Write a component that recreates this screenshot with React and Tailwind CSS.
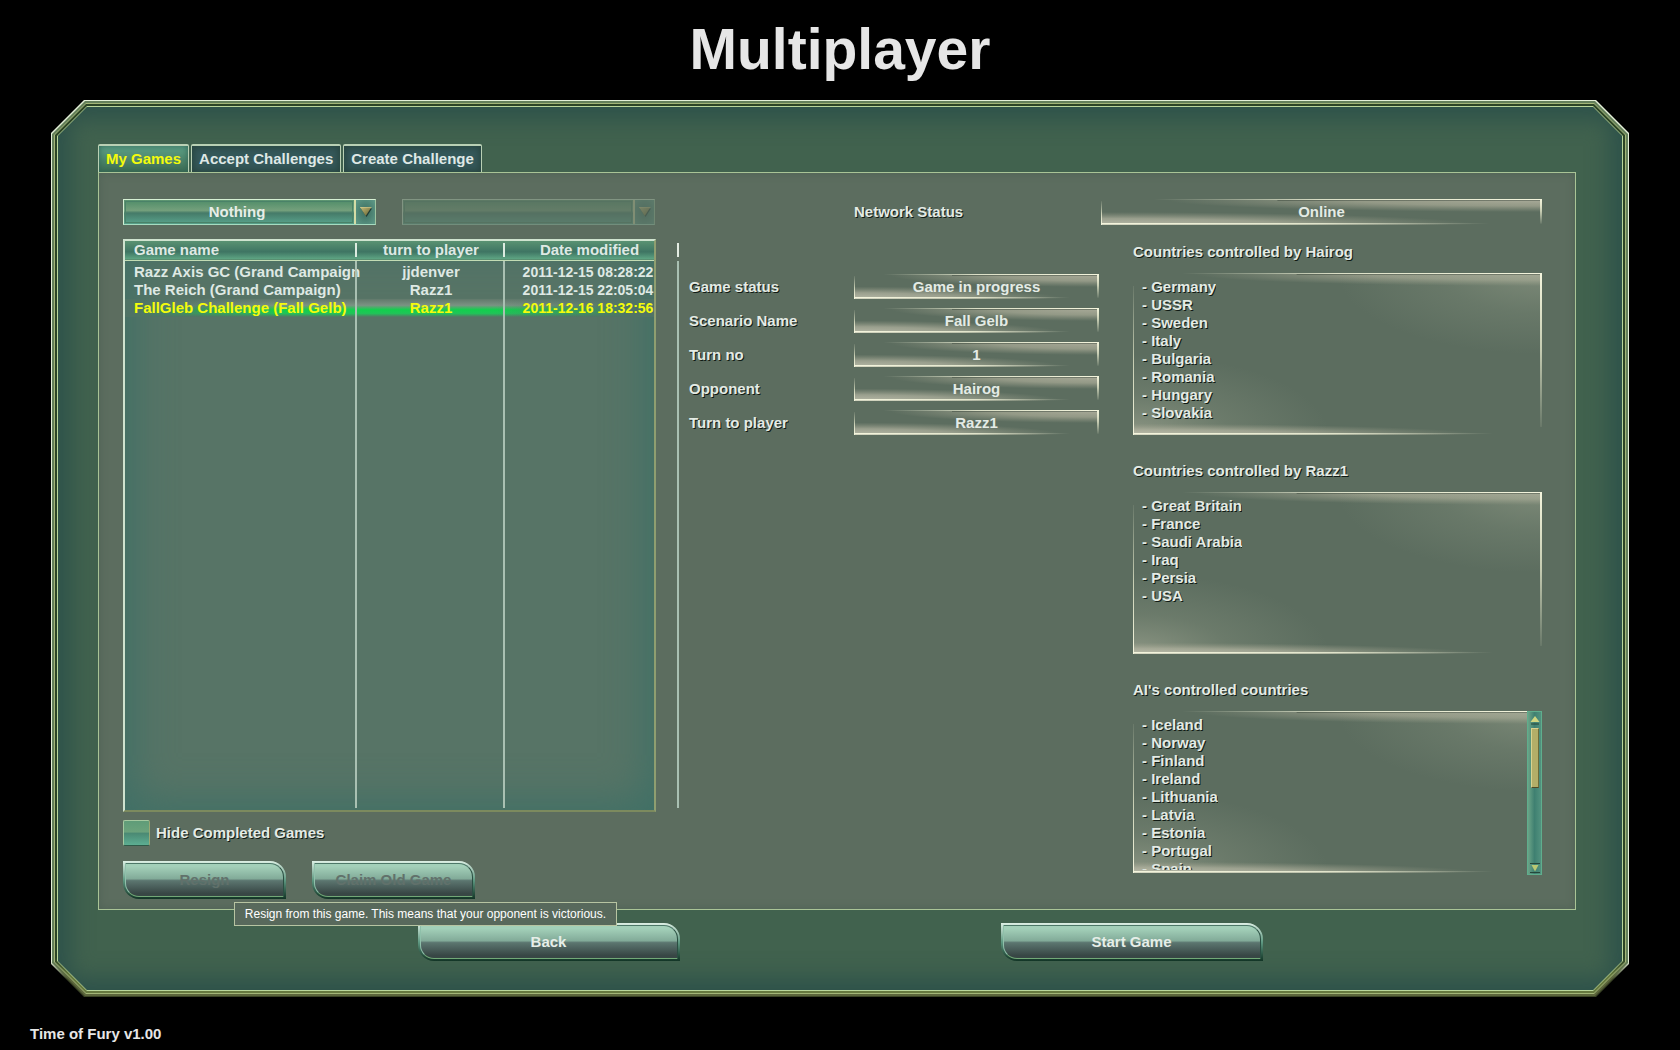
import React, { useState } from "react";

const games = [
  { name: "Razz Axis GC (Grand Campaign", player: "jjdenver", date: "2011-12-15 08:28:22" },
  { name: "The Reich (Grand Campaign)", player: "Razz1", date: "2011-12-15 22:05:04" },
  { name: "FallGleb Challenge (Fall Gelb)", player: "Razz1", date: "2011-12-16 18:32:56" },
];

const details = [
  { label: "Game status", value: "Game in progress" },
  { label: "Scenario Name", value: "Fall Gelb" },
  { label: "Turn no", value: "1" },
  { label: "Opponent", value: "Hairog" },
  { label: "Turn to player", value: "Razz1" },
];

const countries = [
  {
    title: "Countries controlled by Hairog",
    list: ["Germany", "USSR", "Sweden", "Italy", "Bulgaria", "Romania", "Hungary", "Slovakia"],
  },
  {
    title: "Countries controlled by Razz1",
    list: ["Great Britain", "France", "Saudi Arabia", "Iraq", "Persia", "USA"],
  },
  {
    title: "AI's controlled countries",
    list: ["Iceland", "Norway", "Finland", "Ireland", "Lithuania", "Latvia", "Estonia", "Portugal", "Spain"],
    scroll: true,
  },
];

const Gradients = () => (
  <svg className="absolute w-0 h-0" aria-hidden="true">
    <defs>
      <linearGradient id="lineTop">
        <stop offset="0.12" stopColor="#e9ecd2" stopOpacity="0" />
        <stop offset="0.5" stopColor="#e9ecd2" stopOpacity="0.9" />
        <stop offset="1" stopColor="#f4f5dd" />
      </linearGradient>
      <linearGradient id="lineBottom">
        <stop offset="0" stopColor="#f4f5dd" />
        <stop offset="0.5" stopColor="#e9ecd2" stopOpacity="0.9" />
        <stop offset="0.88" stopColor="#e9ecd2" stopOpacity="0" />
      </linearGradient>
      <linearGradient id="lineRight" x2="0" y2="1">
        <stop offset="0" stopColor="#f4f5dd" />
        <stop offset="0.5" stopColor="#dfe3c6" stopOpacity="0.8" />
        <stop offset="1" stopColor="#dfe3c6" stopOpacity="0.1" />
      </linearGradient>
      <linearGradient id="lineLeft" x2="0" y2="1">
        <stop offset="0" stopColor="#dfe3c6" stopOpacity="0.1" />
        <stop offset="0.5" stopColor="#dfe3c6" stopOpacity="0.8" />
        <stop offset="1" stopColor="#f4f5dd" />
      </linearGradient>
      <radialGradient id="glowTop" cx="1" cy="0" r="1">
        <stop offset="0" stopColor="#b0b09e" stopOpacity="0.9" />
        <stop offset="0.5" stopColor="#a6a894" stopOpacity="0.75" />
        <stop offset="1" stopColor="#9da08c" stopOpacity="0" />
      </radialGradient>
      <radialGradient id="glowBottom" cx="0" cy="1" r="1">
        <stop offset="0" stopColor="#c2c2b0" stopOpacity="0.9" />
        <stop offset="0.5" stopColor="#aeb09d" stopOpacity="0.75" />
        <stop offset="1" stopColor="#9da08c" stopOpacity="0" />
      </radialGradient>
      <radialGradient id="hazeTop" cx="1" cy="0" r="1">
        <stop offset="0" stopColor="#a0a892" stopOpacity="0.5" />
        <stop offset="0.5" stopColor="#94a08a" stopOpacity="0.22" />
        <stop offset="1" stopColor="#94a08a" stopOpacity="0" />
      </radialGradient>
      <radialGradient id="hazeBottom" cx="0" cy="1" r="1">
        <stop offset="0" stopColor="#b0b49f" stopOpacity="0.6" />
        <stop offset="0.5" stopColor="#98a28c" stopOpacity="0.25" />
        <stop offset="1" stopColor="#94a08a" stopOpacity="0" />
      </radialGradient>
      <linearGradient id="arrow" x2="1" y2="1">
        <stop offset="0" stopColor="#c8c07c" />
        <stop offset="1" stopColor="#5f5c2c" />
      </linearGradient>
    </defs>
  </svg>
);

const Bevel = ({ large }) => (
  <svg className="absolute inset-0 w-full h-full" aria-hidden="true">
    <rect x="15%" y="1" width="85%" height="12" fill="url(#glowTop)" />
    <svg width="100%" height="100%" viewBox="0 0 100 100" preserveAspectRatio="none">
      {large ? (
        <>
          <rect x="50" y="0" width="50" height="50" fill="url(#hazeTop)" />
          <rect x="0" y="50" width="48" height="50" fill="url(#hazeBottom)" />
          <rect x="0" y="93" width="85" height="7" fill="url(#glowBottom)" />
        </>
      ) : (
        <rect x="0" y="50" width="85" height="50" fill="url(#glowBottom)" />
      )}
    </svg>
    <rect width="100%" height="1" fill="url(#lineTop)" />
    <rect x="40%" y="1" width="60%" height="1" fill="#2c3a30" opacity="0.4" />
    <svg x="100%" width="2" height="100%" overflow="visible">
      <rect x="-2" width="2" height="95%" fill="url(#lineRight)" />
    </svg>
    <rect y="8%" width="1" height="92%" fill="url(#lineLeft)" />
    <svg y="100%" width="100%" height="2" overflow="visible">
      <rect y="-2" width="100%" height="1" fill="url(#lineBottom)" />
      <rect y="-1" width="90%" height="1" fill="url(#lineBottom)" opacity="0.5" />
    </svg>
  </svg>
);

const Arrow = () => (
  <svg width="12" height="10" viewBox="0 0 12 10" aria-hidden="true">
    <path d="M1 1.500L12 1.500L6.500 10Z" fill="#1f3a34" />
    <path d="M0 0H11.500L5.700 9Z" fill="url(#arrow)" />
    <path d="M0 0H11.500" stroke="#d9d296" />
  </svg>
);

const Dropdown = ({ label, value, disabled }) => (
  <div
    className={`relative flex h-[26px] w-[253px] border border-t-[#d6f0d4] border-l-[#d6f0d4] border-r-[#9fc5a0] border-b-[#a6dcc0] bg-[linear-gradient(to_bottom,#5b9470,#70a07c_45%,#4b7f6c_55%,#57a08a)] ${
      disabled ? "opacity-30" : ""
    }`}
  >
    <select
      aria-label={label}
      disabled={disabled}
      className="m-px flex-1 appearance-none border border-[#4a8268] bg-[linear-gradient(to_bottom,#56906c,#74a07c_42%,#457a68_55%,#569c86)] pr-1 text-center text-[15px] leading-4 font-bold text-[#e6eee8] opacity-100 outline-none"
    >
      <option>{value}</option>
    </select>
    <span className="pointer-events-none flex w-[21px] items-center justify-center border-l-2 border-[#d4dca6] bg-radial from-[#3c6e60] to-[#5f9a88]">
      <Arrow />
    </span>
  </div>
);

const GlossButton = ({ children, className, disabled }) => (
  <button
    disabled={disabled}
    className={`h-[38px] rounded-tr-[16px] rounded-bl-[16px] bg-linear-to-b from-[#dcefe4] via-[#5f9a83] to-[#123526] p-0.5 ${className}`}
  >
    <span className="block h-full rounded-tr-[14px] rounded-bl-[14px] border border-t-[#4d7868] border-l-[#8fc0aa] border-r-[#2a4f42] border-b-[#72a877] bg-[linear-gradient(to_bottom,#a3d0b9_8%,#82ab99_46%,#5c7670_52%,#384745_92%)]">
      <span
        className={`flex h-full items-center justify-center text-[15px] font-bold ${
          disabled ? "text-[#61716b]" : "text-[#e6eee8]"
        }`}
      >
        {children}
      </span>
    </span>
  </button>
);

const Frame = ({ children }) => (
  <div className="flex flex-1 bg-linear-to-b from-[#e4f0d8] from-96% to-[#3b4426] to-98% p-px [clip-path:polygon(33px_0,calc(100%-33px)_0,100%_33px,100%_calc(100%-33px),calc(100%-33px)_100%,33px_100%,0_calc(100%-33px),0_33px)]">
    <div className="flex flex-1 bg-linear-to-b from-[#64805a] from-96% to-[#5c663c] to-98% p-0.5 [clip-path:polygon(33px_0,calc(100%-33px)_0,100%_33px,100%_calc(100%-33px),calc(100%-33px)_100%,33px_100%,0_calc(100%-33px),0_33px)]">
      <div className="flex flex-1 bg-[#a3b678] p-px [clip-path:polygon(32px_0,calc(100%-32px)_0,100%_32px,100%_calc(100%-32px),calc(100%-32px)_100%,32px_100%,0_calc(100%-32px),0_32px)]">
        <div className="flex flex-1 bg-linear-to-b from-[#2c4526] from-96% to-[#66793f] to-98% p-0.5 [clip-path:polygon(31px_0,calc(100%-31px)_0,100%_31px,100%_calc(100%-31px),calc(100%-31px)_100%,31px_100%,0_calc(100%-31px),0_31px)]">
          <div className="flex flex-1 bg-[#b9d69a] p-px [clip-path:polygon(30px_0,calc(100%-30px)_0,100%_30px,100%_calc(100%-30px),calc(100%-30px)_100%,30px_100%,0_calc(100%-30px),0_30px)]">
            <div className="flex flex-1 flex-col bg-[#41624e] pt-[37px] pr-[46px] pb-[29px] pl-10 shadow-[inset_0_0_24px_10px_#2b504a] [clip-path:polygon(29px_0,calc(100%-29px)_0,100%_29px,100%_calc(100%-29px),calc(100%-29px)_100%,29px_100%,0_calc(100%-29px),0_29px)]">
              {children}
            </div>
          </div>
        </div>
      </div>
    </div>
  </div>
);

const Tabs = () => {
  const [active, setActive] = useState("My Games");
  return (
    <div role="tablist" className="flex gap-0.5">
      {["My Games", "Accept Challenges", "Create Challenge"].map((tab) => (
        <button
          key={tab}
          role="tab"
          aria-selected={active === tab}
          onClick={() => setActive(tab)}
          className={`h-7 rounded-t-xs border border-t-2 border-b-0 border-[#b9d0b4] px-[7px] text-[15px] font-bold ${
            active === tab
              ? "bg-linear-to-b from-[#5fa389] to-[#3d6b52] text-[#f4fb0c] shadow-[inset_0_0_6px_#2f6455]"
              : "bg-[#35585a] text-[#dfe8e6] shadow-[inset_0_0_6px_2px_#284640]"
          }`}
        >
          {tab}
        </button>
      ))}
    </div>
  );
};

const GamesTable = () => (
  <div className="flex flex-1 gap-[21px]">
    <div className="relative w-[533px] border-2 border-t-[#cfe3cf] border-l-[#cfe3cf] border-r-[#8f9e70] border-b-[#7c8a5e] bg-[#577466] shadow-[inset_0_0_40px_8px_#3f7066]">
      <table className="w-full table-fixed border-collapse text-[15px] leading-[18px] font-bold text-[#dfe9e4]">
        <thead>
          <tr className="h-[19px] border-b border-[#c3dcb4] bg-linear-to-b from-[#5a9272] via-[#3f7563] via-60% to-[#5ea583]">
            <th className="w-[232px] p-0 pl-[9px] text-left">Game name</th>
            <th className="w-[148px] p-0">turn to player</th>
            <th className="p-0 pl-5">Date modified</th>
          </tr>
        </thead>
        <tbody className="before:block before:h-0.5 before:content-['']">
          {games.map((game, i) => (
            <tr
              key={game.name}
              className={
                i === 2
                  ? "h-[18px] bg-[linear-gradient(to_right,#4f7365_2%,transparent_30%,transparent_70%,#507366_96%),linear-gradient(to_bottom,#61796b,#7b9283_35%,#12cf4d_60%,#20c458_80%,#557566)] text-[#f4fb0c]"
                  : "h-[18px]"
              }
            >
              <td className="p-0 pl-[9px] whitespace-nowrap">{game.name}</td>
              <td className="p-0 text-center">{game.player}</td>
              <td className="p-0 pl-[17px] text-center text-[14px] whitespace-nowrap">{game.date}</td>
            </tr>
          ))}
        </tbody>
      </table>
      {/* column rules run over the rows down to the bottom of the box */}
      <div className="pointer-events-none absolute inset-0 flex">
        <div className="flex w-[232px] flex-col items-end gap-1 py-0.5">
          <span className="h-3.5 w-0.5 bg-[#dcebe0]" />
          <span className="w-0.5 flex-1 bg-[#a9c0b2]" />
        </div>
        <div className="flex w-[148px] flex-col items-end gap-1 py-0.5">
          <span className="h-3.5 w-0.5 bg-[#dcebe0]" />
          <span className="w-0.5 flex-1 bg-[#a9c0b2]" />
        </div>
      </div>
    </div>
    <div className="flex flex-col gap-1 py-1">
      <span className="h-3.5 w-0.5 bg-[#e3ece2]" />
      <span className="w-0.5 flex-1 bg-[#a9c0b2]" />
    </div>
  </div>
);

const Scrollbar = () => (
  <div className="flex h-[164px] w-[15px] flex-col items-center border border-[#5fae8d] bg-linear-to-r from-[#6ba487] via-[#3f8071] to-[#52927f]">
    <button aria-label="Scroll up" className="flex h-4 items-center">
      <svg width="10" height="9" viewBox="0 0 10 9">
        <path d="M5 0L9.500 6H0.500Z" fill="#d0d680" />
        <path d="M1 8H9" stroke="#26473b" />
      </svg>
    </button>
    <span className="h-[60px] w-2 border border-t-[#d8d28f] border-l-[#d8d28f] border-r-[#6f6b38] border-b-[#4c4a27] bg-[#b3ae68]" />
    <span className="flex-1" />
    <button aria-label="Scroll down" className="flex h-3 items-center">
      <svg width="10" height="10" viewBox="0 0 10 10">
        <path d="M0 0.500H10M0 9.500H10" stroke="#26473b" />
        <path d="M5 8.500L8.500 2H1.500Z" fill="#b9c873" />
      </svg>
    </button>
  </div>
);

const CountryBox = ({ title, list, scroll }) => (
  <section className="h-[219px]">
    <h2 className="mb-3 text-[15px] leading-[18px] font-bold [text-shadow:1px_1px_0_#101a14]">{title}</h2>
    <div className="relative flex h-[162px] justify-between">
      <Bevel large />
      <ul className="relative h-[159px] overflow-hidden pt-[5px] pl-[9px] text-[15px] leading-[18px] font-bold [text-shadow:1px_1px_0_#101a14]">
        {list.map((country) => (
          <li key={country}>- {country}</li>
        ))}
      </ul>
      {scroll && (
        <div className="relative">
          <Scrollbar />
        </div>
      )}
    </div>
  </section>
);

const App = () => {
  const [hide, setHide] = useState(false);

  return (
    <div className="flex min-h-screen flex-col bg-black font-['Liberation_Sans',Arial,sans-serif] text-[#e4ebe5]">
      <Gradients />
      <h1 className="pt-4 text-center text-[57px] leading-[66px] font-bold text-[#e6e6e6]">Multiplayer</h1>

      <main className="mx-[51px] mt-[18px] flex flex-1">
        <Frame>
          <Tabs />
          <div className="flex flex-1 border border-[#a9c496] bg-[#5c6d5f] pt-[26px] pr-[33px] pl-6 shadow-[inset_0_0_8px_#4f6255]">
            <div className="flex w-[556px] flex-col">
              <div className="mb-3.5 flex gap-[26px]">
                <Dropdown label="Filter" value="Nothing" />
                <Dropdown label="Filter value" value="" disabled />
              </div>
              <GamesTable />
              <label className="mt-2 flex items-center gap-1.5 text-[15px] font-bold [text-shadow:1px_1px_0_#101a14]">
                <input
                  type="checkbox"
                  checked={hide}
                  onChange={() => setHide(!hide)}
                  className="h-[26px] w-[27px] appearance-none rounded-xs border border-t-[#a5c9a0] border-l-[#a5c9a0] border-r-[#9aa874] border-b-[#2f5a48] bg-[linear-gradient(to_bottom,#5f9c78,#6ba27c_45%,#4b8a74_52%,#5dae92)] checked:bg-[#d8d28f]"
                />
                Hide Completed Games
              </label>
              <div className="relative mt-[15px] mb-[10px] flex gap-[26px]">
                <GlossButton className="w-[163px]" disabled>
                  Resign
                </GlossButton>
                <GlossButton className="w-[163px]" disabled>
                  Claim Old Game
                </GlossButton>
                <div
                  role="tooltip"
                  className="absolute top-[41px] left-[111px] z-10 w-[383px] border border-[#b7c4a2] bg-[#58695c] text-center text-[12px] leading-[22px] whitespace-nowrap text-white"
                >
                  Resign from this game. This means that your opponent is victorious.
                </div>
              </div>
            </div>

            <div className="flex flex-1 flex-col pl-2.5">
              <div className="flex h-[26px] items-center justify-between pl-[165px]">
                <span className="text-[15px] font-bold [text-shadow:1px_1px_0_#101a14]">Network Status</span>
                <div className="relative h-[26px] w-[441px] text-center text-[15px] leading-[25px] font-bold">
                  <Bevel />
                  <span className="relative">Online</span>
                </div>
              </div>
              <div className="mt-[18px] flex flex-1 gap-[34px]">
                <dl className="mt-[31px] flex w-[410px] flex-col gap-[9px]">
                  {details.map((item) => (
                    <div key={item.label} className="flex h-[25px] text-[15px] leading-[25px] font-bold">
                      <dt className="w-[165px] [text-shadow:1px_1px_0_#101a14]">{item.label}</dt>
                      <dd className="relative flex-1 text-center">
                        <Bevel />
                        <span className="relative">{item.value}</span>
                      </dd>
                    </div>
                  ))}
                </dl>
                <div className="flex-1">
                  {countries.map((box) => (
                    <CountryBox key={box.title} {...box} />
                  ))}
                </div>
              </div>
            </div>
          </div>
          <div className="mt-[13px] flex justify-center gap-[321px] pl-1.5">
            <GlossButton className="w-[262px]">Back</GlossButton>
            <GlossButton className="w-[262px]">Start Game</GlossButton>
          </div>
        </Frame>
      </main>

      <footer className="flex h-[53px] items-end px-[30px] pb-[7px] text-[15px] leading-[18px] font-bold text-[#e6e6e6]">
        Time of Fury v1.00
      </footer>
    </div>
  );
};

export default App;
